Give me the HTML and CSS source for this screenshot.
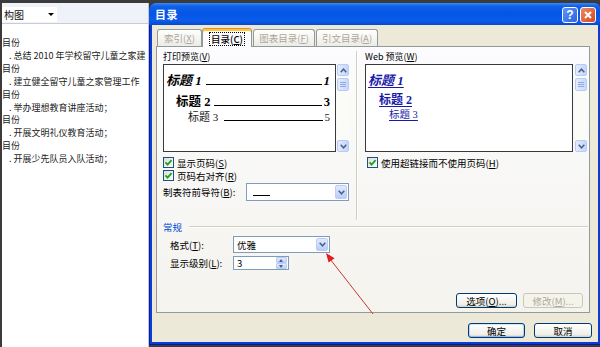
FILE: index.html
```html
<!DOCTYPE html>
<html lang="zh-CN">
<head>
<meta charset="utf-8">
<title>目录</title>
<link rel="stylesheet" href="styles.css">
</head>
<body>
<div class="screen">
  <div class="doc">
    <div class="toolbar">
      <div class="tb-combo"><span>构图</span><span class="tb-arrow"></span></div>
    </div>
    <div class="doc-text">
      <p>目份</p>
      <p class="item">. 总结 2010 年学校留守儿童之家建</p>
      <p>目份</p>
      <p class="item">. 建立健全留守儿童之家管理工作</p>
      <p>目份</p>
      <p class="item">. 举办理想教育讲座活动；</p>
      <p>目份</p>
      <p class="item">. 开展文明礼仪教育活动；</p>
      <p>目份</p>
      <p class="item">. 开展少先队员入队活动；</p>
    </div>
  </div>

  <div class="dialog">
    <div class="titlebar">
      <span class="title">目录</span>
      <span class="tbtn help">?</span>
      <span class="tbtn close"><svg width="10" height="10" viewBox="0 0 10 10"><path d="M2 2 L8 8 M8 2 L2 8" stroke="#fff" stroke-width="2" fill="none"/></svg></span>
    </div>
    <div class="body">
      <div class="tabs">
        <div class="tab dis t1">索引(<u>X</u>)</div>
        <div class="tab sel t2"><span class="focus">目录(<u>C</u>)</span></div>
        <div class="tab dis t3">图表目录(<u>F</u>)</div>
        <div class="tab dis t4">引文目录(<u>A</u>)</div>
      </div>
      <div class="panel">
        <div class="columns">
          <div class="col col-left">
            <div class="lbl">打印预览(<u>V</u>)</div>
            <div class="preview-row">
              <div class="pbox print">
                <div class="pl l1"><span class="ht">标题 1</span><span class="leader"></span><span class="pn">1</span></div>
                <div class="pl l2"><span class="ht">标题 2</span><span class="leader"></span><span class="pn">3</span></div>
                <div class="pl l3"><span class="ht">标题 3</span><span class="leader"></span><span class="pn">5</span></div>
              </div>
              <div class="vscroll">
                <span class="sbb"><svg width="7" height="5" viewBox="0 0 7 5"><polyline points="0.7,4.2 3.5,1.2 6.3,4.2" fill="none" stroke="#4d6185" stroke-width="1.5"/></svg></span>
                <span class="sbthumb"><span class="grip"></span></span>
                <span class="sbfill"></span>
                <span class="sbb"><svg width="7" height="5" viewBox="0 0 7 5"><polyline points="0.7,0.8 3.5,3.8 6.3,0.8" fill="none" stroke="#4d6185" stroke-width="1.5"/></svg></span>
              </div>
            </div>
            <div class="chk first"><span class="box"><svg width="9" height="9" viewBox="0 0 9 9"><path d="M1.5 4.3 L3.6 6.6 L7.6 2.1" fill="none" stroke="#21a121" stroke-width="1.8"/></svg></span>显示页码(<u>S</u>)</div>
            <div class="chk"><span class="box"><svg width="9" height="9" viewBox="0 0 9 9"><path d="M1.5 4.3 L3.6 6.6 L7.6 2.1" fill="none" stroke="#21a121" stroke-width="1.8"/></svg></span>页码右对齐(<u>R</u>)</div>
            <div class="field">
              <span class="flbl">制表符前导符(<u>B</u>):</span>
              <div class="combo c-tab"><span class="cval"><span class="lead-sample"></span></span><span class="cbtn"><svg width="7" height="5" viewBox="0 0 7 5"><polyline points="0.7,0.8 3.5,3.8 6.3,0.8" fill="none" stroke="#4d6185" stroke-width="1.5"/></svg></span></div>
            </div>
          </div>
          <div class="vsep"></div>
          <div class="col col-right">
            <div class="lbl">Web 预览(<u>W</u>)</div>
            <div class="preview-row">
              <div class="pbox web">
                <div class="wl w1">标题 1</div>
                <div class="wl w2">标题 2</div>
                <div class="wl w3">标题 3</div>
              </div>
              <div class="vscroll wide">
                <span class="sbb"><svg width="7" height="5" viewBox="0 0 7 5"><polyline points="0.7,4.2 3.5,1.2 6.3,4.2" fill="none" stroke="#4d6185" stroke-width="1.5"/></svg></span>
                <span class="sbthumb"><span class="grip"></span></span>
                <span class="sbfill"></span>
                <span class="sbb"><svg width="7" height="5" viewBox="0 0 7 5"><polyline points="0.7,0.8 3.5,3.8 6.3,0.8" fill="none" stroke="#4d6185" stroke-width="1.5"/></svg></span>
              </div>
            </div>
            <div class="chk first web-chk"><span class="box"><svg width="9" height="9" viewBox="0 0 9 9"><path d="M1.5 4.3 L3.6 6.6 L7.6 2.1" fill="none" stroke="#21a121" stroke-width="1.8"/></svg></span>使用超链接而不使用页码(<u>H</u>)</div>
          </div>
        </div>
        <div class="group-head"><span class="gtitle">常规</span><span class="gline"></span></div>
        <div class="frow r1">
          <span class="flbl2">格式(<u>T</u>):</span>
          <div class="combo c-fmt"><span class="cval">优雅</span><span class="cbtn"><svg width="7" height="5" viewBox="0 0 7 5"><polyline points="0.7,0.8 3.5,3.8 6.3,0.8" fill="none" stroke="#4d6185" stroke-width="1.5"/></svg></span></div>
        </div>
        <div class="frow r2">
          <span class="flbl2">显示级别(<u>L</u>):</span>
          <div class="combo c-spin"><span class="cval">3</span><span class="spin"><span class="sp up"></span><span class="sp down"></span></span></div>
        </div>
        <div class="pbtns">
          <span class="btn b-opt">选项(<u>O</u>)...</span>
          <span class="btn b-mod dis">修改(<u>M</u>)...</span>
        </div>
      </div>
      <div class="dbtns">
        <span class="btn b-ok default">确定</span>
        <span class="btn b-cancel">取消</span>
      </div>
    </div>
  </div>

  <svg class="arrow" width="600" height="347" viewBox="0 0 600 347">
    <line x1="373" y1="314" x2="330" y2="259" stroke="#c23a33" stroke-width="1"/>
    <polygon points="326,253 334.6,258.2 328.6,262.6" fill="#e21e1e"/>
  </svg>
</div>
</body>
</html>
```

FILE: styles.css
```css
* { box-sizing: border-box; }

body {
  margin: 0;
  width: 600px;
  height: 347px;
  overflow: hidden;
  background: #3b3b3b;
  font-family: "Noto Sans CJK SC", "Liberation Sans", sans-serif;
}

.screen {
  position: relative;
  width: 600px;
  height: 347px;
  padding-top: 3px;
}

/* ---------- document behind ---------- */
.doc {
  margin-left: 2px;
  width: 147px;
  height: 344px;
  background: #fff;
  border-right: 1px solid #c6c6c6;
  overflow: hidden;
}

.toolbar {
  height: 21px;
  background: #f0f2f9;
  border-bottom: 1px solid #c9ccd6;
  display: flex;
  align-items: flex-end;
  padding-bottom: 1px;
}

.tb-combo {
  width: 55px;
  height: 15px;
  background: #fff;
  display: flex;
  align-items: center;
  justify-content: space-between;
  padding: 0 3px 0 2px;
  font-size: 10px;
  line-height: 12px;
  color: #111;
}

.tb-arrow {
  width: 0;
  height: 0;
  border-left: 3px solid transparent;
  border-right: 3px solid transparent;
  border-top: 3px solid #000;
}

.doc-text {
  padding-top: 13px;
  font-size: 9px;
  line-height: 12.9px;
  color: #222;
  white-space: nowrap;
}

.doc-text p { margin: 0; }
.doc-text .item { padding-left: 7px; }

/* ---------- dialog ---------- */
.dialog {
  position: absolute;
  left: 149px;
  top: 3px;
  width: 452px;
  height: 342px;
  background: #0b3cd6;
  border-radius: 7px 7px 0 0;
  display: flex;
  flex-direction: column;
  box-shadow: inset 1px 0 #0019b0, inset 0 -1px #0019b0;
  z-index: 3;
}

.titlebar {
  height: 22px;
  flex: none;
  display: flex;
  align-items: center;
  padding: 0 5px 0 6px;
  border-radius: 7px 7px 0 0;
  background: linear-gradient(#3b8cf6 0, #0f61ea 3px, #0555e6 45%, #0a5ce9 80%, #0846d0 100%);
}

.title {
  color: #fff;
  font-size: 11px;
  line-height: 14px;
  font-weight: bold;
  flex: 1;
  letter-spacing: 0.5px;
}

.tbtn {
  width: 16px;
  height: 16px;
  border: 1px solid #fff;
  border-radius: 3px;
  display: flex;
  align-items: center;
  justify-content: center;
  margin-left: 2px;
  margin-top: 1px;
}

.help {
  background: linear-gradient(135deg, #5e95f8, #2d63e0);
  color: #fff;
  font: bold 12px/14px "Liberation Sans", sans-serif;
}

.close {
  background: linear-gradient(135deg, #ec8a68, #d8461f);
}

.body {
  flex: 1;
  margin: 0 3px 3px 3px;
  background: #ece9d8;
  padding: 4px 8px 0 4px;
  display: flex;
  flex-direction: column;
  font-size: 9.5px;
  line-height: 12px;
  color: #000;
}

u { text-decoration: underline; text-underline-offset: 1px; }

/* tabs */
.tabs {
  height: 17px;
  flex: none;
  display: flex;
  align-items: flex-end;
  padding-left: 1px;
}

.tab {
  height: 17px;
  border: 1px solid #919b9c;
  border-bottom: none;
  border-radius: 3px 3px 0 0;
  background: linear-gradient(#ffffff, #ecebe5);
  display: flex;
  align-items: center;
  justify-content: center;
}

.tab.dis { color: #aca899; }
.t1 { width: 45px; }
.t2 { width: 50px; }
.t3 { width: 62px; margin-left: 1px; }
.t4 { width: 62px; margin-left: 1px; }

.tab.sel {
  height: 19px;
  margin-bottom: -1px;
  position: relative;
  z-index: 2;
  background: #fcfcfe;
  border-top: 1px solid #e68b2c;
  box-shadow: inset 0 2px #ffc83c;
  padding-top: 1px;
}

.focus {
  outline: 1px dotted #000;
  padding: 0 1px;
  font-weight: 500;
}

/* panel */
.panel {
  height: 267px;
  flex: none;
  border: 1px solid #919b9c;
  background: linear-gradient(#fcfcfe, #f4f3ee);
  padding: 4px 2px 4px 6px;
  display: flex;
  flex-direction: column;
  position: relative;
  z-index: 1;
}

.columns {
  height: 169px;
  display: flex;
  flex: none;
}

.col-left { width: 186px; }
.col-right { width: 222px; }

.vsep {
  width: 2px;
  border-left: 1px solid #d0d0bf;
  border-right: 1px solid #ffffff;
  margin: 0 7px;
}

.lbl {
  height: 13px;
  line-height: 11px;
  font-size: 9px;
}

.preview-row {
  display: flex;
  height: 88px;
}

.pbox {
  height: 88px;
  background: #fff;
  border: 1px solid #3a3a3a;
}

.pbox.print { width: 173px; }
.pbox.web { width: 208px; }

.vscroll {
  width: 12px;
  height: 88px;
  margin-left: 1px;
  background: #fbfbf8;
  display: flex;
  flex-direction: column;
}

.vscroll.wide { margin-left: 2px; }

.sbb {
  height: 12px;
  flex: none;
  border: 1px solid #b7cbf5;
  border-radius: 2px;
  background: linear-gradient(90deg, #e3ebfe, #c3d5fc);
  display: flex;
  align-items: center;
  justify-content: center;
}

.sbthumb {
  height: 13px;
  margin-top: 2px;
  flex: none;
  border: 1px solid #b7cbf5;
  border-radius: 2px;
  background: linear-gradient(90deg, #e3ebfe, #c8d8fc);
  display: flex;
  align-items: center;
  justify-content: center;
}

.grip {
  width: 6px;
  height: 5px;
  background: repeating-linear-gradient(#8da8e8 0 1px, transparent 1px 2px);
}

.sbfill { flex: 1; }

/* print preview lines */
.pl {
  display: flex;
  align-items: baseline;
  padding-right: 5px;
  font-family: "Liberation Serif", "Noto Sans CJK SC", serif;
  color: #000;
  white-space: nowrap;
}

.leader {
  flex: 1;
  height: 0;
  border-bottom: 1px solid #000;
  margin: 0 2px 0 4px;
}

.l1 {
  height: 16px;
  margin-top: 8px;
  padding-left: 2px;
  font-size: 13px;
  line-height: 16px;
  font-weight: bold;
  font-style: italic;
}

.l2 {
  height: 16px;
  margin-top: 5px;
  padding-left: 12px;
  font-size: 12.5px;
  line-height: 16px;
  font-weight: bold;
}

.l3 {
  height: 14px;
  padding-left: 24px;
  font-size: 11px;
  line-height: 14px;
  color: #222;
}

.l3 .leader { margin-left: 6px; }

/* web preview lines */
.wl {
  font-family: "Liberation Serif", "Noto Sans CJK SC", serif;
  color: #1a1aa8;
  text-decoration: underline;
  text-underline-offset: 2px;
  white-space: nowrap;
}

.w1 {
  height: 16px;
  margin-top: 8px;
  padding-left: 2px;
  font-size: 13px;
  line-height: 16px;
  font-weight: bold;
  font-style: italic;
}

.w2 {
  height: 15px;
  margin-top: 4px;
  padding-left: 13px;
  font-size: 12px;
  line-height: 15px;
  font-weight: bold;
}

.w3 {
  height: 14px;
  padding-left: 23px;
  font-size: 10.5px;
  line-height: 14px;
}

/* checkboxes */
.chk {
  height: 13px;
  display: flex;
  align-items: center;
  white-space: nowrap;
}

.chk.first { margin-top: 4px; }
.web-chk { padding-left: 2px; }

.box {
  width: 11px;
  height: 11px;
  flex: none;
  border: 1px solid #1c5180;
  background: linear-gradient(135deg, #dcdcd7, #ffffff);
  display: flex;
  align-items: center;
  justify-content: center;
  margin-right: 3px;
}

/* fields */
.field {
  height: 18px;
  margin-top: 1px;
  display: flex;
  align-items: center;
}

.flbl { width: 83px; flex: none; }

.combo {
  border: 1px solid #7f9db9;
  background: #fff;
  display: flex;
  align-items: stretch;
}

.cval {
  flex: 1;
  padding-left: 3px;
  display: flex;
  align-items: center;
}

.cbtn {
  width: 12px;
  margin: 1px;
  border: 1px solid #b9cdf6;
  border-radius: 2px;
  background: linear-gradient(#e1eafe, #b8cdfa);
  display: flex;
  align-items: center;
  justify-content: center;
}

.c-tab { width: 103px; height: 18px; }

.lead-sample {
  width: 17px;
  height: 0;
  border-bottom: 1px solid #000;
  margin-top: 7px;
  margin-left: 3px;
}

.group-head {
  height: 13px;
  display: flex;
  align-items: center;
  flex: none;
}

.gtitle { color: #0046d5; }

.gline {
  flex: 1;
  height: 2px;
  border-top: 1px solid #d0d0bf;
  border-bottom: 1px solid #fff;
  margin-left: 7px;
  margin-right: -1px;
}

.frow {
  display: flex;
  align-items: center;
  flex: none;
}

.r1 { margin-top: 3px; height: 17px; }
.r2 { margin-top: 3px; height: 14px; }

.flbl2 { width: 63px; margin-left: 7px; flex: none; }

.c-fmt { width: 97px; height: 17px; }
.c-spin { width: 56px; height: 14px; }

.spin {
  width: 11px;
  margin: 0 1px;
  display: flex;
  flex-direction: column;
}

.sp {
  flex: 1;
  border: 1px solid #b9cdf6;
  border-radius: 1px;
  background: linear-gradient(#e1eafe, #bfd1fa);
  position: relative;
}

.sp::after {
  content: "";
  position: absolute;
  left: 2px;
  top: 1px;
  border-left: 2.5px solid transparent;
  border-right: 2.5px solid transparent;
}

.sp.up::after { border-bottom: 3px solid #4d6185; }
.sp.down::after { border-top: 3px solid #4d6185; }

/* buttons */
.btn {
  height: 15px;
  border: 1px solid #003c74;
  border-radius: 3px;
  background: linear-gradient(#ffffff, #f0efe9 80%, #d6d0c5);
  display: flex;
  align-items: center;
  justify-content: center;
  white-space: nowrap;
}

.btn.dis {
  border-color: #c9c7ba;
  color: #aca899;
  background: #f5f4ea;
}

.pbtns {
  margin-top: auto;
  display: flex;
  justify-content: flex-end;
  gap: 6px;
  margin-right: 4px;
}

.b-opt { width: 61px; }
.b-mod { width: 60px; }

.dbtns {
  margin-top: 10px;
  margin-right: -2px;
  display: flex;
  justify-content: flex-end;
  gap: 9px;
}

.b-ok { width: 57px; }
.b-cancel { width: 58px; }

.btn.default {
  box-shadow: inset 0 -1px #97b8f6, inset 1px 0 #bcd1f8, inset -1px 0 #bcd1f8, inset 0 1px #cee7ff;
}

/* annotation arrow */
.arrow {
  position: absolute;
  left: 0;
  top: 0;
  z-index: 5;
  pointer-events: none;
}
```
